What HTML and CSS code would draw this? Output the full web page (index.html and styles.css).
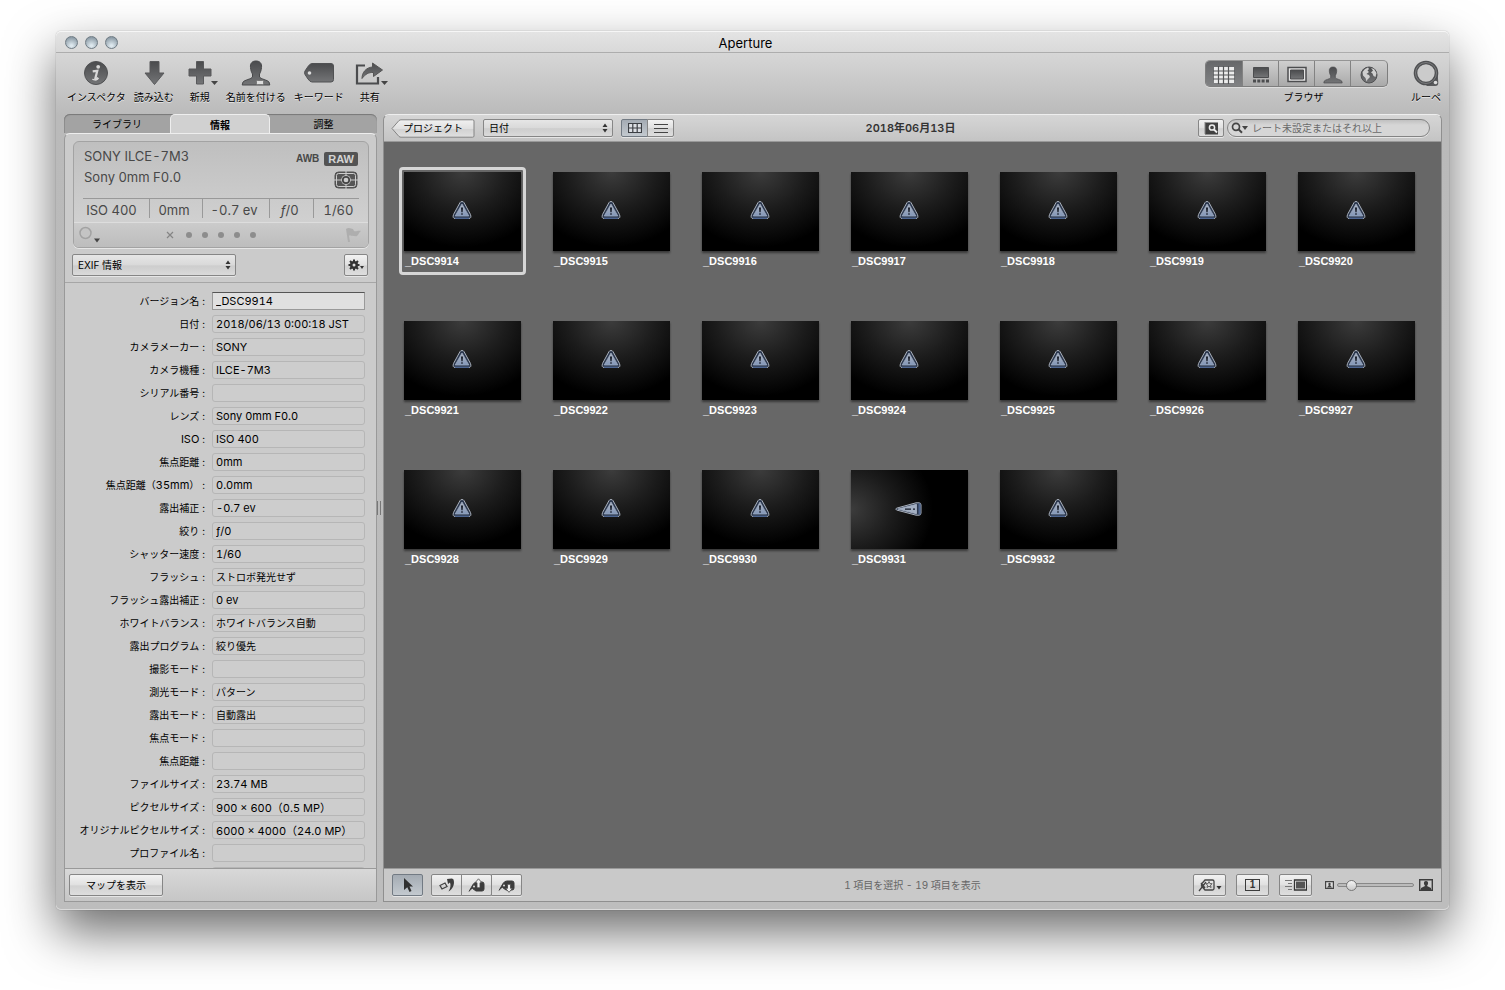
FILE: index.html
```html
<!DOCTYPE html>
<html lang="ja">
<head>
<meta charset="utf-8">
<title>Aperture</title>
<link rel="stylesheet" href="styles.css">
</head>
<body>
<svg class="defs" aria-hidden="true">
  <defs>
    <linearGradient id="ink" x1="0" y1="0" x2="0" y2="1"><stop offset="0" stop-color="#4a4b4d"/><stop offset="1" stop-color="#747577"/></linearGradient>
    <linearGradient id="steel" x1="0" y1="0" x2="0" y2="1"><stop offset="0" stop-color="#b4bac4"/><stop offset="1" stop-color="#8296b8"/></linearGradient>
    <symbol id="warn" viewBox="0 0 20 20">
      <path d="M10 1.500Q11.400 1.500 12 2.600L18.500 14.500Q19.800 18.400 16.800 18.500H3.200Q.2 18.400 1.500 14.500L8 2.600Q8.600 1.500 10 1.500Z" fill="#2c384e" stroke="#a9b0bb" stroke-width="1"/>
      <path d="M3 18.300h14" stroke="#4d6590" stroke-width="1.400"/>
      <path d="M10 4L16.800 16H3.200Z" fill="url(#steel)" stroke="#9aa8bf" stroke-width=".8" stroke-linejoin="round"/>
      <path d="M9 7.500h2l-.4 4.800h-1.200zM9.300 13.200h1.400v1.500H9.300z" fill="#141a26"/>
    </symbol>
    <symbol id="updown" viewBox="0 0 6 10"><path d="M3 0.500 5.500 4h-5zM3 9.500 5.500 6h-5z" fill="#333"/></symbol>
    <symbol id="bust" viewBox="0 0 30 26"><path d="M15 1c-4 0-6 2.500-5.500 6.500.2 2.500 1 5 2 6.500v3c-1 2-8 3-9.500 5l-.8 3h27.600l-.8-3c-1.500-2-8.500-3-9.500-5v-3c1-1.500 1.800-4 2-6.500C21 3.500 19 1 15 1z" fill="url(#ink)" stroke="#48494b"/></symbol>
  </defs>
</svg>
<div class="window">
  <header class="titlebar">
    <div class="lights"><button class="light" aria-label="閉じる"></button><button class="light" aria-label="しまう"></button><button class="light" aria-label="拡大"></button></div>
    <h1 class="title">Aperture</h1>
  </header>

  <nav class="toolbar">
    <div class="tools">
      <button class="tool"><svg width="26" height="26" viewBox="0 0 26 26"><circle cx="13" cy="13" r="11.500" fill="url(#ink)" stroke="#505153"/><circle cx="15.200" cy="6.800" r="1.900" fill="#d8d8d8"/><path d="M9.700 11.400l4.600-.6-2 7.600c-.3 1.500 1.500 1.200 3-.6" fill="none" stroke="#d8d8d8" stroke-width="2.200"/><path d="M9.300 19.300q3 1.200 5.500-.6" fill="none" stroke="#d8d8d8" stroke-width="1.200"/></svg><span>インスペクタ</span></button>
      <button class="tool"><svg width="26" height="26" viewBox="0 0 26 26"><path d="M9 1.500h9V13h5L13.500 24.500 4 13h5z" fill="url(#ink)" stroke="#58595b"/></svg><span>読み込む</span></button>
      <button class="tool"><svg class="wide" width="36" height="26" viewBox="0 0 36 26"><path d="M14.500 1.500h7v7.500h7.500v7h-7.500v8h-7v-8H7V9h7.500z" fill="url(#ink)" stroke="#58595b"/><path d="M29 21h7l-3.500 4z" fill="#444"/></svg><span>新規</span></button>
      <button class="tool"><svg width="30" height="26"><use href="#bust"/><rect x="15.500" y="20.500" width="7" height="4" rx="1" fill="#ddd" stroke="#777"/></svg><span>名前を付ける</span></button>
      <button class="tool"><svg width="32" height="26" viewBox="0 0 32 26"><path d="M9 3.500h19q2.500 0 2.500 2.500v13.500q0 2.500-2.500 2.500H9q-2 0-4-3l-3-4.500q-1-1.800 0-3.500L5 6.500q2-3 4-3z" fill="url(#ink)" stroke="#505153"/><circle cx="6.500" cy="13" r="1.800" fill="#ddd"/></svg><span>キーワード</span></button>
      <button class="tool"><svg class="wide" width="36" height="26" viewBox="0 0 36 26"><path d="M13 5.500H5v18h21V17" fill="none" stroke="#4b4c4e" stroke-width="2.200"/><path d="M20.500 3l10 7-9 6.500v-4c-5-.3-8 1.500-11.500 6 0-6 4-11 10.500-11.500z" fill="url(#ink)" stroke="#555"/><path d="M29 21h7l-3.500 4z" fill="#444"/></svg><span>共有</span></button>
    </div>
    <div class="tools">
      <div class="views">
        <div class="segments">
          <button class="segment on" aria-label="ブラウザ表示"><svg width="22" height="18" viewBox="0 0 22 18"><path d="M1 1h20v16H1z" fill="#ececec"/><path d="M5.500 0v18M10.500 0v18M15.500 0v18M0 5h22M0 9h22M0 13h22" stroke="#555658" stroke-width="1.200"/></svg></button>
          <button class="segment" aria-label="分割表示"><svg width="18" height="18" viewBox="0 0 18 18"><path d="M1.500 1.500h15v10h-15z" fill="url(#ink)" stroke="#4c4d4f"/><path d="M1 13.500h3v3H1zM5.300 13.500h3v3h-3zM9.600 13.500h3v3h-3zM14 13.500h3v3h-3z" fill="#4c4d4f"/></svg></button>
          <button class="segment" aria-label="ビューア表示"><svg width="20" height="18" viewBox="0 0 20 18"><path d="M1 1.500h18v14H1z" fill="#e4e4e4" stroke="#4c4d4f" stroke-width="1.500"/><path d="M3.500 4h13v9h-13z" fill="url(#ink)" stroke="#4c4d4f"/></svg></button>
          <button class="segment" aria-label="人々"><svg width="20" height="18"><use href="#bust"/></svg></button>
          <button class="segment" aria-label="撮影地"><svg width="18" height="18" viewBox="0 0 18 18"><circle cx="9" cy="9" r="8" fill="url(#ink)" stroke="#505153"/><path d="M5 3l3-1.500 1 1.500-1.500 1.500L9 6 6.500 8 9 9l1 2-2.500 2.500-1 2L5.500 12 3 9.500 2.500 6zM11 2l3 1 2.500 4-1 4-2-1-1-2.500-1.500-1L13 4.500z" fill="#cfcfcf"/></svg></button>
        </div>
        <span class="views-label">ブラウザ</span>
      </div>
      <button class="tool"><svg width="28" height="28" viewBox="0 0 28 28"><path d="M20 20l5.500-9 .8 12q0 3-3 3H14z" fill="#5a5b5d"/><circle cx="14" cy="13" r="10.500" fill="#cbcbcb" stroke="#4f5052" stroke-width="3.600"/><circle cx="14" cy="13" r="10.500" fill="none" stroke="#7c7d7f" stroke-width="1"/><circle cx="23.500" cy="22.500" r="1.800" fill="#ddd"/></svg><span>ルーペ</span></button>
    </div>
  </nav>

  <div class="content">
    <aside class="sidebar">
      <div class="tabs" role="tablist"><button class="tab" role="tab">ライブラリ</button><button class="tab active" role="tab" aria-selected="true">情報</button><button class="tab" role="tab">調整</button></div>
      <div class="panel">
        <section class="camera">
          <div class="camera-top">
            <div class="camera-name"><p>SONY ILCE-7M3</p><p>Sony 0mm F0.0</p></div>
            <div class="badges">
              <div class="badge-row"><span>AWB</span><span class="raw">RAW</span></div>
              <svg width="24" height="18" viewBox="0 0 24 18"><rect x="1" y="1" width="22" height="16" rx="3.500" fill="#555" stroke="#505050"/><rect x="2.500" y="2.500" width="19" height="13" rx="2" fill="none" stroke="#ccc"/><path d="M12 0v18M0 9h24" stroke="#ccc"/><circle cx="12" cy="9" r="4.800" fill="#ccc"/><circle cx="12" cy="9" r="3.200" fill="#ccc" stroke="#444" stroke-width="1.700"/></svg>
            </div>
          </div>
          <div class="exposure"><span>ISO 400</span><span>0mm</span><span>-0.7 ev</span><span><i>ƒ</i>/0</span><span>1/60</span></div>
          <div class="rating">
            <svg width="24" height="18" viewBox="0 0 24 18"><circle cx="7.500" cy="7" r="5.500" fill="#c4c4c4" stroke="#a2a2a2" stroke-width="1.500"/><path d="M16 12.500h6l-3 4z" fill="#444"/></svg>
            <svg width="92" height="12" viewBox="0 0 92 12"><path d="M2 3l6 6M8 3l-6 6" stroke="#858585" stroke-width="1.200"/><g fill="#8d8d8d"><circle cx="24" cy="6" r="3"/><circle cx="40" cy="6" r="3"/><circle cx="56" cy="6" r="3"/><circle cx="72" cy="6" r="3"/><circle cx="88" cy="6" r="3"/></g></svg>
            <svg width="18" height="16" viewBox="0 0 18 16"><path d="M2 2c3-2 5 0 7 0l1 2c2 1 4-1 7 0-2 1-2 3-4 5-2 1-4-1-6 0l-1-1-1 1 1 6H4z" fill="#aeaeae"/></svg>
          </div>
        </section>
        <div class="preset">
          <div class="popup preset-popup"><select aria-label="メタデータ表示"><option>EXIF 情報</option></select><svg width="6" height="10"><use href="#updown"/></svg></div>
          <button class="button gear" aria-label="アクション"><svg width="16" height="12" viewBox="0 0 16 12"><circle cx="6" cy="6" r="4" fill="#333"/><path d="M6 .5v11M.5 6h11M2 2l8 8M10 2l-8 8" stroke="#333" stroke-width="2"/><circle cx="6" cy="6" r="1.500" fill="#ddd"/><path d="M12 7h4l-2 3z" fill="#333"/></svg></button>
        </div>
        <div class="fields">
          <label for="f1">バージョン名<b>:</b></label><input class="edit" id="f1" value="_DSC9914">
          <label for="f2">日付<b>:</b></label><input id="f2" readonly value="2018/06/13 0:00:18 JST">
          <label for="f3">カメラメーカー<b>:</b></label><input id="f3" readonly value="SONY">
          <label for="f4">カメラ機種<b>:</b></label><input id="f4" readonly value="ILCE-7M3">
          <label for="f5">シリアル番号<b>:</b></label><input id="f5" readonly>
          <label for="f6">レンズ<b>:</b></label><input id="f6" readonly value="Sony 0mm F0.0">
          <label for="f7"><span class="latin">ISO</span><b>:</b></label><input id="f7" readonly value="ISO 400">
          <label for="f8">焦点距離<b>:</b></label><input id="f8" readonly value="0mm">
          <label for="f9">焦点距離（<span class="latin">35mm</span>）<b>:</b></label><input id="f9" readonly value="0.0mm">
          <label for="f10">露出補正<b>:</b></label><input id="f10" readonly value="-0.7 ev">
          <label for="f11">絞り<b>:</b></label><input id="f11" readonly value="ƒ/0">
          <label for="f12">シャッター速度<b>:</b></label><input id="f12" readonly value="1/60">
          <label for="f13">フラッシュ<b>:</b></label><input class="kana" id="f13" readonly value="ストロボ発光せず">
          <label for="f14">フラッシュ露出補正<b>:</b></label><input id="f14" readonly value="0 ev">
          <label for="f15">ホワイトバランス<b>:</b></label><input class="kana" id="f15" readonly value="ホワイトバランス自動">
          <label for="f16">露出プログラム<b>:</b></label><input class="kana" id="f16" readonly value="絞り優先">
          <label for="f17">撮影モード<b>:</b></label><input id="f17" readonly>
          <label for="f18">測光モード<b>:</b></label><input class="kana" id="f18" readonly value="パターン">
          <label for="f19">露出モード<b>:</b></label><input class="kana" id="f19" readonly value="自動露出">
          <label for="f20">焦点モード<b>:</b></label><input id="f20" readonly>
          <label for="f21">焦点距離<b>:</b></label><input id="f21" readonly>
          <label for="f22">ファイルサイズ<b>:</b></label><input id="f22" readonly value="23.74 MB">
          <label for="f23">ピクセルサイズ<b>:</b></label><input id="f23" readonly value="900 × 600（0.5 MP）">
          <label for="f24">オリジナルピクセルサイズ<b>:</b></label><input id="f24" readonly value="6000 × 4000（24.0 MP）">
          <label for="f25">プロファイル名<b>:</b></label><input id="f25" readonly>
          <span></span><input aria-label="追加情報" readonly>
        </div>
        <footer class="bar side-bar"><button class="button map">マップを表示</button></footer>
      </div>
    </aside>

    <div class="splitter"><svg width="4" height="14"><path d="M.5 0v14M3.500 0v14" stroke="#777"/></svg></div>

    <main class="browser">
      <header class="browser-head">
        <div class="group">
          <button class="back"><svg width="84" height="19" viewBox="0 0 84 19"><defs><linearGradient id="face" x1="0" y1="0" x2="0" y2="1"><stop offset="0" stop-color="#f1f1f1"/><stop offset=".5" stop-color="#e0e0e0"/><stop offset=".55" stop-color="#d2d2d2"/><stop offset="1" stop-color="#e0e0e0"/></linearGradient></defs><path d="M1 9.500L8 1.500Q9 .8 10 .8H81.500Q83 .8 83 2V17Q83 18.200 81.500 18.200H10Q9 18.200 8 17.500Z" fill="url(#face)" stroke="#848484"/></svg><span>プロジェクト</span></button>
          <div class="popup sort-popup"><select aria-label="並べ替え"><option>日付</option></select><svg width="6" height="10"><use href="#updown"/></svg></div>
          <div class="joined">
            <button class="button pressed" aria-label="グリッド"><svg width="14" height="10" viewBox="0 0 14 10"><path d="M.5.5h13v9H.5zM.5 5h13M4.800.5v9M9.200.5v9" fill="#dcdfe4" stroke="#3c3f44" stroke-width="1.200"/></svg></button>
            <button class="button" aria-label="リスト"><svg width="14" height="10" viewBox="0 0 14 10"><path d="M0 1.500h14M0 5.500h14M0 9.500h14" stroke="#444"/></svg></button>
          </div>
        </div>
        <h2 class="project">2018年06月13日</h2>
        <div class="group search-group">
          <button class="button" aria-label="フィルタ"><svg width="15" height="13" viewBox="0 0 15 13"><path d="M1 .5h13v12H1z" fill="#414141"/><path d="M1 .5v12" stroke="#888" stroke-width="2" stroke-dasharray="1"/><circle cx="8" cy="5.500" r="2.600" fill="none" stroke="#eee" stroke-width="1.500"/><path d="M10 7.500l3 3" stroke="#eee" stroke-width="1.800"/></svg></button>
          <div class="search"><svg width="18" height="12" viewBox="0 0 18 12"><circle cx="5" cy="4.800" r="3.500" fill="none" stroke="#444" stroke-width="1.700"/><path d="M7.500 7.300l3.500 3.500" stroke="#444" stroke-width="2"/><path d="M11 4h6l-3 4z" fill="#444"/></svg><input aria-label="検索" placeholder="レート未設定またはそれ以上"></div>
        </div>
      </header>
      <div class="thumbs">
        <figure class="cell selected"><div class="photo"><svg><use href="#warn"/></svg></div><figcaption>_DSC9914</figcaption></figure>
        <figure class="cell"><div class="photo"><svg><use href="#warn"/></svg></div><figcaption>_DSC9915</figcaption></figure>
        <figure class="cell"><div class="photo"><svg><use href="#warn"/></svg></div><figcaption>_DSC9916</figcaption></figure>
        <figure class="cell"><div class="photo"><svg><use href="#warn"/></svg></div><figcaption>_DSC9917</figcaption></figure>
        <figure class="cell"><div class="photo"><svg><use href="#warn"/></svg></div><figcaption>_DSC9918</figcaption></figure>
        <figure class="cell"><div class="photo"><svg><use href="#warn"/></svg></div><figcaption>_DSC9919</figcaption></figure>
        <figure class="cell"><div class="photo"><svg><use href="#warn"/></svg></div><figcaption>_DSC9920</figcaption></figure>
        <figure class="cell"><div class="photo"><svg><use href="#warn"/></svg></div><figcaption>_DSC9921</figcaption></figure>
        <figure class="cell"><div class="photo"><svg><use href="#warn"/></svg></div><figcaption>_DSC9922</figcaption></figure>
        <figure class="cell"><div class="photo"><svg><use href="#warn"/></svg></div><figcaption>_DSC9923</figcaption></figure>
        <figure class="cell"><div class="photo"><svg><use href="#warn"/></svg></div><figcaption>_DSC9924</figcaption></figure>
        <figure class="cell"><div class="photo"><svg><use href="#warn"/></svg></div><figcaption>_DSC9925</figcaption></figure>
        <figure class="cell"><div class="photo"><svg><use href="#warn"/></svg></div><figcaption>_DSC9926</figcaption></figure>
        <figure class="cell"><div class="photo"><svg><use href="#warn"/></svg></div><figcaption>_DSC9927</figcaption></figure>
        <figure class="cell"><div class="photo"><svg><use href="#warn"/></svg></div><figcaption>_DSC9928</figcaption></figure>
        <figure class="cell"><div class="photo"><svg><use href="#warn"/></svg></div><figcaption>_DSC9929</figcaption></figure>
        <figure class="cell"><div class="photo"><svg><use href="#warn"/></svg></div><figcaption>_DSC9930</figcaption></figure>
        <figure class="cell"><div class="photo turned"><svg class="sideways" viewBox="0 0 28 14"><path d="M2.500 6.200L22 .8h3Q27 .8 27 3v8q0 2.200-2 2.200h-3L2.500 8Q1 7.100 2.500 6.200z" fill="#2c384e" stroke="#a9b0bb"/><path d="M25.500 1.500v11" stroke="#4d6590" stroke-width="2"/><path d="M4 7.100L22.500 2.300v9.500z" fill="#a3afc2" stroke="#a9b4c6" stroke-width=".8"/><path d="M11 7.100h6M19 7.100h2" stroke="#141a26" stroke-width="1.200"/></svg></div><figcaption>_DSC9931</figcaption></figure>
        <figure class="cell"><div class="photo"><svg><use href="#warn"/></svg></div><figcaption>_DSC9932</figcaption></figure>
      </div>
      <footer class="bar browser-foot">
        <div class="group">
          <button class="button pressed square" aria-label="選択"><svg width="12" height="16" viewBox="0 0 12 16"><path d="M2 1l9 8.500H7.500l2 4.500-2 1-2.200-4.700L2 13z" fill="#303030"/></svg></button>
          <div class="joined trio">
            <button class="button" aria-label="回転"><svg width="16" height="14" viewBox="0 0 16 14"><path d="M1 7.500l5-2.500 2 3.500-5 2.500z" fill="none" stroke="#444" stroke-width="1.300"/><path d="M8 1l5-.5 1.500 1C16 6 14 11 9.500 13.500 11.500 10 12 7 11 4.500L9 6z" fill="#3c3c3c"/></svg></button>
            <button class="button" aria-label="リフト"><svg width="18" height="15" viewBox="0 0 18 15"><path d="M1 13.500L5 6.500Q6.500 4 9 4h5q2 0 2 2v5q0 2-2 2H8L4.500 10.500" fill="#3c3c3c" stroke="#3c3c3c"/><circle cx="6" cy="8.500" r="1" fill="#ddd"/><path d="M10.500.8l3.500 4h-2v5H9v-5H7z" fill="#eee" stroke="#444" stroke-width=".8"/></svg></button>
            <button class="button" aria-label="スタンプ"><svg width="18" height="15" viewBox="0 0 18 15"><path d="M1 12.500L5 5.500Q6.500 3 9 3h5q2 0 2 2v5q0 2-2 2H8L4.500 9.500" fill="#3c3c3c" stroke="#3c3c3c"/><circle cx="6" cy="7.500" r="1" fill="#ddd"/><path d="M11 14.300l3.500-4h-2v-4h-3v4h-2z" fill="#eee" stroke="#444" stroke-width=".8"/></svg></button>
          </div>
        </div>
        <p class="status">1 項目を選択 - 19 項目を表示</p>
        <div class="group foot-right">
          <button class="button square" aria-label="キーワード"><svg width="24" height="14" viewBox="0 0 24 14"><path d="M7 2h7.500q1.500 0 1.500 1.500v7q0 1.500-1.500 1.500H7L3.500 8V6zM1 13L8 4M3 5l4 5" fill="none" stroke="#444" stroke-width="1.300"/><path d="M11 3.500l1 2.200h2.200l-1.700 1.500.6 2.300-2.100-1.300-2 1.300.6-2.300-1.700-1.500H10z" fill="#ddd" stroke="#444" stroke-width=".8"/><path d="M18.500 8h5L21 11.500z" fill="#333"/></svg></button>
          <button class="button square one" aria-label="主画面"><span>1</span></button>
          <button class="button square" aria-label="スライドショー"><svg width="22" height="12" viewBox="0 0 22 12"><path d="M0 1.500h7M3 4.500h4M0 7.500h7M3 10.500h4" stroke="#777"/><path d="M9.500 1h12v10h-12z" fill="#eee" stroke="#333" stroke-width="1.300"/><path d="M11 2.500h9v7h-9z" fill="#555"/></svg></button>
          <div class="zoom">
            <svg width="9" height="8" viewBox="0 0 9 8"><path d="M.6.6h7.800v6.800H.6z" fill="#ddd" stroke="#444" stroke-width="1.200"/><circle cx="4.500" cy="3" r="1.200" fill="#444"/><path d="M2 6.500L4 4h1l2 2.500z" fill="#444"/></svg>
            <input type="range" aria-label="サムネールのサイズ" min="0" max="100" value="12">
            <svg width="14" height="12" viewBox="0 0 14 12"><path d="M.7.7h12.600v10.600H.7z" fill="#ccc" stroke="#3c3c3c" stroke-width="1.400"/><path d="M7 2Q4.500 2 5 5l1 2-4 2v2h10V9L8 7l1-2q.5-3-2-3z" fill="#3c3c3c"/></svg>
          </div>
        </div>
      </footer>
    </main>
  </div>
</div>
</body>
</html>
```

FILE: styles.css
```css
* { box-sizing: border-box; }
body {
  margin: 0;
  height: 100vh;
  padding: 31px 56px 80px;
  background: #fff;
  color: #000;
  font: 11px/14px Inter, "Noto Sans CJK JP", sans-serif;
  font-variant-numeric: tabular-nums;
  overflow: hidden;
}
button, input, select { font: inherit; font-variant-numeric: inherit; color: inherit; margin: 0; padding: 0; border: 0; background: none; }
h1, h2, p, figure { margin: 0; }
svg { display: block; flex: none; }
.defs { position: absolute; width: 0; height: 0; }

.window {
  display: flex;
  flex-direction: column;
  height: 100%;
  border-radius: 5px;
  background: linear-gradient(#e4e4e4, #d9d9d9 21px, #d6d6d6 23px, #bababa 84px, #bdbdbd);
  box-shadow: 0 0 1px rgba(0,0,0,.5), 0 22px 50px rgba(0,0,0,.58), inset 0 1px 0 #f6f6f6, inset 0 -1px 0 #dadada;
}
.titlebar { display: flex; align-items: center; height: 22px; padding: 2px 23px 0 9px; border-bottom: 1px solid #adadad; }
.lights { display: flex; gap: 7px; width: 60px; }
.light { width: 13px; height: 13px; border-radius: 50%; border: 1px solid #6f7b84; background: radial-gradient(circle at 50% 80%, #dce7ed 10%, #8c9ba6 80%); }
.title { flex: 1; padding-right: 60px; text-align: center; font-size: 13px; font-weight: 400; }

.toolbar { display: flex; justify-content: space-between; height: 61px; padding: 7px 5px 0 11px; font-size: 10px; }
.tools { display: flex; gap: 8px; align-items: flex-start; }
.tool { display: flex; flex-direction: column; align-items: center; justify-content: space-between; height: 45px; min-width: 36px; line-height: 15px; white-space: nowrap; text-shadow: 0 1px 0 #e6e6e6; }
.tool .wide { width: 36px; }
.views { display: flex; flex-direction: column; justify-content: space-between; height: 45px; margin-right: 12px; }
.segments { display: flex; border: 1px solid #7d7d7d; border-top-color: #959595; border-radius: 5px; background: linear-gradient(#cfcfcf, #a9a9a9); box-shadow: 0 1px 0 #ddd; overflow: hidden; }
.segment { display: flex; align-items: center; justify-content: center; width: 36px; height: 25px; padding-top: 3px; border-right: 1px solid #828282; }
.segment.on { width: 37px; background: linear-gradient(#666769, #818284); }
.segment:last-child { border-right: 0; }
.views-label { padding-left: 14px; text-align: center; line-height: 15px; }

.content { display: grid; grid-template-columns: 313px 6px minmax(0, 1fr); flex: 1; min-height: 0; padding: 0 7px 8px 8px; }
.sidebar { display: flex; flex-direction: column; min-height: 0; }
.tabs { display: grid; grid-template-columns: 106px 100px 1fr; height: 19px; border-radius: 6px 6px 0 0; background: #a3a3a3; box-shadow: inset 0 1px 1px #777, inset 1px 0 0 #8f8f8f; }
.tab { font-size: 10px; line-height: 20px; }
.tab.active { border-radius: 5px 5px 0 0; background: #d1d1d1; border: 1px solid #eee; border-bottom: 0; font-weight: 700; line-height: 18px; }
.panel { display: flex; flex-direction: column; flex: 1; min-height: 0; border: 1px solid #999; border-top-color: #eee; border-radius: 6px 6px 0 0; background: #cbcbcb; }

.camera { margin: 7px 7px 0 8px; border: 1px solid #a3a3a3; border-radius: 6px; background: linear-gradient(#bfbfbf, #d0d0d0 80px); box-shadow: 0 1px 0 #e6e6e6; color: #484848; overflow: hidden; }
.camera-top { display: flex; justify-content: space-between; height: 56px; padding: 4px 9px 0 10px; }
.camera-name { font-size: 13px; line-height: 21px; }
.badges { display: flex; flex-direction: column; align-items: flex-end; gap: 5px; padding: 6px 1px 0 0; }
.badge-row { display: flex; gap: 5px; align-items: center; font: bold 10px/14px "Liberation Sans", sans-serif; }
.raw { padding: 0 4px; border-radius: 2px; background: #535353; color: #d4d4d4; font-size: 11px; }
.exposure { display: grid; grid-template-columns: 66fr 53fr 67fr 44fr 46fr; margin: 0 9px 4px; border-top: 1px solid #999; font-size: 13px; line-height: 20px; text-align: center; white-space: nowrap; }
.exposure span { padding: 1px 4px 0 0; height: 19px; }
.exposure span:first-child { padding-right: 9px; }
.exposure span:last-child { padding: 1px 0 0 4px; }
.exposure span + span { border-left: 1px solid #999; }
.rating { display: grid; grid-template-columns: 87px 1fr auto; align-items: center; height: 25px; padding: 0 6px 0 4px; border-top: 1px solid #ddd; background: linear-gradient(#cbcbcb, #bdbdbd); }
.preset { display: flex; justify-content: space-between; align-items: center; padding: 6px 8px 6px 7px; border-bottom: 1px solid #a6a6a6; }

.button { display: flex; align-items: center; justify-content: center; border: 1px solid #868686; border-radius: 2px; background: linear-gradient(#f2f2f2, #e0e0e0 50%, #d2d2d2 54%, #dedede); box-shadow: 0 1px 0 #e6e6e6; }
.button.pressed { background: linear-gradient(#a4abb3, #c3c9cf); border-color: #727a83; }
.gear { width: 24px; height: 22px; }
.popup { position: relative; display: flex; }
.popup select { width: 100%; appearance: none; border: 1px solid #868686; border-radius: 2px; background: linear-gradient(#e6e6e6, #d9d9d9 50%, #cdcdcd 54%, #dadada); box-shadow: 0 1px 0 #e6e6e6; padding: 0 5px; }
.popup svg { position: absolute; right: 5px; top: 50%; margin-top: -5px; pointer-events: none; }
.preset-popup { width: 164px; }
.preset-popup select { height: 22px; font-size: 10px; }
.sort-popup { width: 130px; }
.sort-popup select { height: 18px; font-size: 10px; }

.fields { display: grid; grid-template-columns: 140px 1fr; column-gap: 7px; row-gap: 5px; align-content: start; flex: 1; min-height: 0; padding: 9px 11px 0 0; overflow: hidden; }
.fields label { text-align: right; font-size: 10px; line-height: 18px; white-space: nowrap; }
.fields label b { margin-left: 3px; font-weight: 400; }
.fields .latin { font-size: 11px; }
.fields input { width: 100%; min-width: 0; height: 18px; padding: 0 3px; border: 1px solid #b6b6b6; border-radius: 3px; background: #cdcdcd; }
.fields .edit { border: 1px solid #999; border-top-color: #555; border-radius: 0; background: #e0e0e0; }
.fields .kana { padding-bottom: 2px; font-size: 10px; }

.bar { display: flex; align-items: center; height: 33px; border-top: 1px solid #999; background: linear-gradient(#d8d8d8, #c6c6c6); }
.side-bar { padding: 0 4px; }
.map { width: 94px; height: 22px; font-size: 10px; }
.splitter { display: flex; align-items: center; }

.browser { display: flex; flex-direction: column; min-width: 0; min-height: 0; border: 1px solid #8f8f8f; border-top-color: #eee; border-radius: 6px 6px 0 0; background: #cbcbcb; }
.browser-head { display: grid; grid-template-columns: 1fr auto 1fr; align-items: center; height: 27px; padding: 0 11px 0 7px; border-bottom: 1px solid #999; border-radius: 6px 6px 0 0; background: linear-gradient(#d6d6d6, #c4c4c4); }
.group { display: flex; align-items: center; gap: 8px; }
.back { position: relative; display: flex; }
.back span { position: absolute; inset: 0; text-align: center; font-size: 10px; line-height: 18px; }
.joined { display: flex; }
.joined .button { width: 27px; height: 18px; border-radius: 0 2px 2px 0; }
.joined .button + .button { margin-left: -1px; }
.joined .button:first-child { border-radius: 2px 0 0 2px; }
.project { font-size: 11px; font-weight: 600; color: #333; }
.search-group { justify-content: flex-end; gap: 3px; }
.search-group > .button { width: 26px; height: 18px; }
.search { display: flex; align-items: center; gap: 3px; width: 203px; height: 18px; padding: 0 3px; border: 1px solid #848484; border-radius: 9px; background: linear-gradient(#c0c0c0, #d6d6d6 5px); box-shadow: 0 1px 0 #e6e6e6; }
.search input { flex: 1; min-width: 0; font-size: 10px; }
.search input::placeholder { color: #6a6a6a; opacity: 1; }

.thumbs { display: grid; grid-template-columns: repeat(auto-fill, 127px); grid-auto-rows: 108px; gap: 41px 22px; align-content: start; flex: 1; min-height: 0; padding: 25px 8px 0 15px; background: #676767; overflow: hidden; }
.cell { padding: 2px; border: 3px solid transparent; border-radius: 4px; }
.cell.selected { border-color: #d6d6d6; }
.photo { display: flex; align-items: center; justify-content: center; height: 79px; background: radial-gradient(ellipse 75% 95% at 50% 0, #3c3c3c, #1c1c1c 50%, #000); box-shadow: 0 2px 2px rgba(0,0,0,.45); }
.photo svg { width: 20px; height: 20px; margin: 0 1px 4px 0; }
.photo.turned { background: radial-gradient(ellipse 70% 95% at 0 50%, #3c3c3c, #1c1c1c 50%, #000); }
.photo .sideways { width: 28px; height: 14px; margin: 0 3px 2px 0; }
.cell figcaption { padding: 3px 0 0 1px; color: #fff; font: bold 11px/14px "Liberation Sans", sans-serif; }

.browser-foot { display: grid; grid-template-columns: 1fr auto 1fr; padding: 0 8px; background: #c9c9c9; }
.square { width: 33px; height: 22px; }
.square.pressed { width: 31px; }
.trio .button { width: 31px; height: 22px; }
.status { color: #666; font-size: 10px; }
.foot-right { justify-content: flex-end; gap: 10px; }
.one span { width: 15px; height: 12px; border: 1px solid #3c3c3c; color: #333; font: bold 10px/10px "Liberation Sans", sans-serif; }
.zoom { display: flex; align-items: center; gap: 3px; padding-left: 3px; }
.zoom input { width: 77px; height: 12px; margin: 0 2px 0 0; appearance: none; }
.zoom input::-webkit-slider-runnable-track { height: 4px; border: 1px solid #888; border-radius: 2px; background: #bbb; }
.zoom input::-webkit-slider-thumb { appearance: none; width: 11px; height: 11px; margin-top: -4px; border: 1px solid #777; border-radius: 50%; background: linear-gradient(#f4f4f4, #c9c9c9); }
```
